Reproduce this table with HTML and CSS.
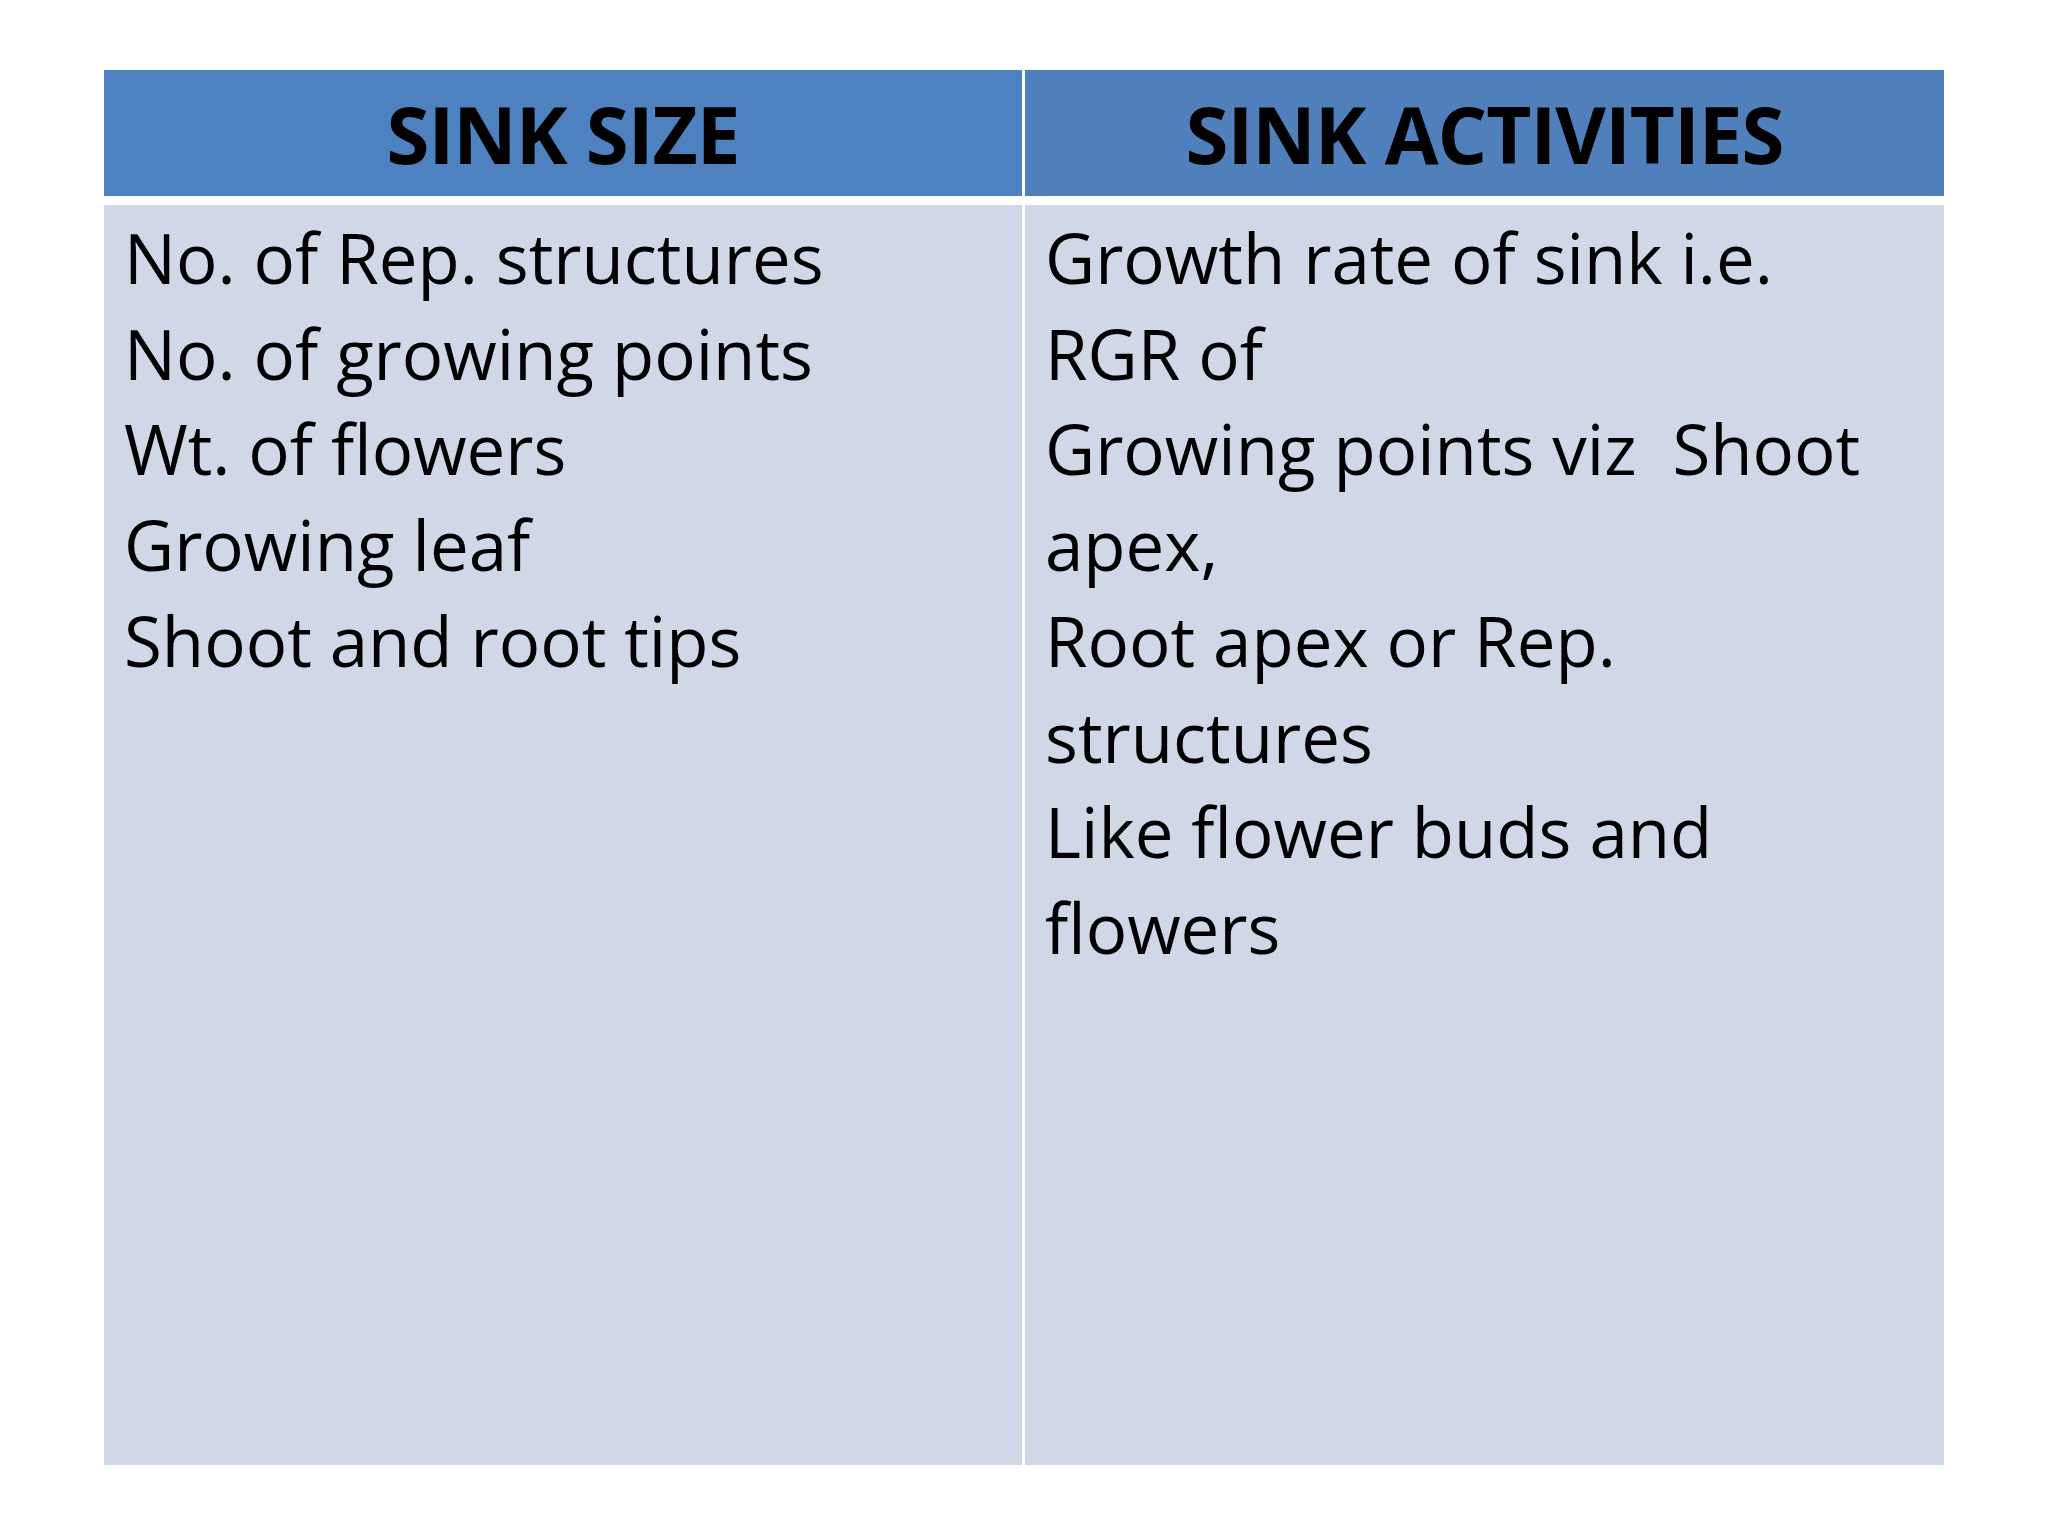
FILE: index.html
```html
<!DOCTYPE html>
<html lang="en">
<head>
<meta charset="utf-8">
<title>Sink Size and Sink Activities</title>
<link rel="stylesheet" href="styles.css">
</head>
<body>
<div class="slide">
  <div class="table">
    <div class="head head-left">SINK SIZE</div>
    <div class="head head-right">SINK ACTIVITIES</div>
    <div class="cell">
      <div class="line">No. of Rep. structures</div>
      <div class="line">No. of growing points</div>
      <div class="line">Wt. of flowers</div>
      <div class="line">Growing leaf</div>
      <div class="line">Shoot and root tips</div>
    </div>
    <div class="cell">
      <div class="line">Growth rate of sink i.e.</div>
      <div class="line">RGR of</div>
      <div class="line">Growing points viz&nbsp; Shoot</div>
      <div class="line">apex,</div>
      <div class="line">Root apex or Rep.</div>
      <div class="line">structures</div>
      <div class="line">Like flower buds and</div>
      <div class="line">flowers</div>
    </div>
  </div>
</div>
</body>
</html>
```

FILE: styles.css
```css
html, body {
  margin: 0;
  padding: 0;
  background: #ffffff;
}

.slide {
  width: 2048px;
  height: 1536px;
  box-sizing: border-box;
  padding: 70px 0 0 104px;
  font-family: "Open Sans", "Liberation Sans", sans-serif;
  color: #000000;
}

.table {
  display: grid;
  width: 1840px;
  grid-template-columns: 918px 919px;
  grid-template-rows: 126px 1260px;
  column-gap: 3px;
  row-gap: 9px;
  background: #ffffff;
}

.head {
  font-weight: 700;
  font-size: 78px;
  line-height: 128px;
  text-align: center;
  letter-spacing: -1px;
}

.head-left {
  background: #4e81c0;
}

.head-right {
  background: #5080bb;
}

.cell {
  background: #d0d8e8;
  padding: 5px 16px 0 20px;
  font-size: 69px;
  line-height: 95.7px;
}

.line {
  white-space: pre;
}
```
